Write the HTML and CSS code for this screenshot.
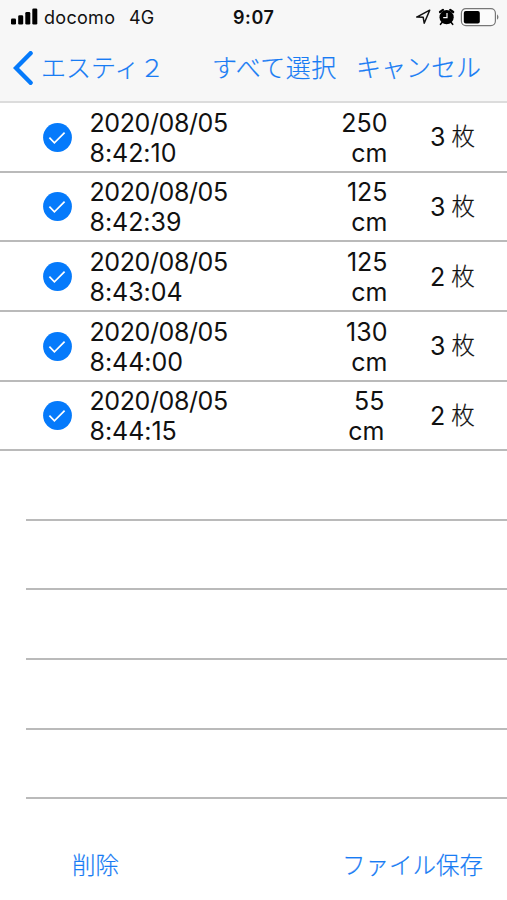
FILE: index.html
```
<!DOCTYPE html>
<html lang="ja">
<head>
<meta charset="utf-8">
<title>エスティ２</title>
<link rel="stylesheet" href="styles.css">
</head>
<body>
<svg class="defs" width="0" height="0">
  <symbol id="check" viewBox="0 0 29 29">
    <circle cx="14.5" cy="14.5" r="14.4" fill="#057afb"/>
    <path d="M6.4 14.6L11.4 19.8L21.6 9.6" fill="none" stroke="#fff" stroke-width="1.7"/>
  </symbol>
</svg>
<header class="top">
  <div class="status">
    <svg class="signal" width="27" height="17" viewBox="0 0 27 17">
      <rect x="0" y="10.5" width="5" height="6" rx="1.3"/>
      <rect x="7.2" y="7.3" width="5" height="9.2" rx="1.3"/>
      <rect x="14.3" y="4" width="5" height="12.5" rx="1.3"/>
      <rect x="21.3" y="0.5" width="5" height="16" rx="1.3"/>
    </svg>
    <span class="carrier">docomo</span>
    <span class="network">4G</span>
    <span class="time">9:07</span>
    <svg class="indicators" width="84" height="20" viewBox="0 0 84 20">
      <path d="M1.7 10.1L14.7 3.2L9.2 16.2L8.2 10.3Z" fill="none" stroke="#111" stroke-width="1.5" stroke-linejoin="round"/>
      <g stroke="#000" stroke-linecap="round" fill="none">
        <path d="M25 5L28 2.8M35.2 2.8L38.2 5" stroke-width="2.2"/>
        <path d="M27 15.5L25.5 17.3M36.2 15.5L37.7 17.3" stroke-width="1.6"/>
      </g>
      <circle cx="31.6" cy="10.2" r="7.1"/>
      <path d="M32 5.9V10.6H28.2" fill="none" stroke="#fff" stroke-width="1.2"/>
      <rect x="46.4" y="1.6" width="34" height="17" rx="4.5" fill="#fbfbfb" stroke="#777" stroke-width="1.2"/>
      <rect x="48.8" y="4" width="16" height="12.4" rx="2"/>
      <path d="M82 7.2Q85 10 82 12.8Z" fill="#777"/>
    </svg>
  </div>
  <nav class="nav">
    <svg class="back" width="20" height="34" viewBox="0 0 20 34">
      <path d="M17.6 2.2L3 17L17.6 31.8" fill="none" stroke="#057afb" stroke-width="4.4" stroke-linecap="round" stroke-linejoin="miter"/>
    </svg>
    <a class="title">エスティ２</a>
    <a class="all">すべて選択</a>
    <a class="cancel">キャンセル</a>
  </nav>
</header>
<main class="list">
  <div class="row"><svg class="mark"><use href="#check"/></svg><div class="date">2020/08/05<br><span>8:42:10</span></div><div class="size">250<br>cm</div><div class="count">3<span>枚</span></div></div>
  <div class="row"><svg class="mark"><use href="#check"/></svg><div class="date">2020/08/05<br><span>8:42:39</span></div><div class="size">125<br>cm</div><div class="count">3<span>枚</span></div></div>
  <div class="row"><svg class="mark"><use href="#check"/></svg><div class="date">2020/08/05<br><span>8:43:04</span></div><div class="size">125<br>cm</div><div class="count">2<span>枚</span></div></div>
  <div class="row"><svg class="mark"><use href="#check"/></svg><div class="date">2020/08/05<br><span>8:44:00</span></div><div class="size">130<br>cm</div><div class="count">3<span>枚</span></div></div>
  <div class="row"><svg class="mark"><use href="#check"/></svg><div class="date">2020/08/05<br><span>8:44:15</span></div><div class="size short">55<br>cm</div><div class="count">2<span>枚</span></div></div>
  <div class="row empty"></div>
  <div class="row empty"></div>
  <div class="row empty"></div>
  <div class="row empty"></div>
  <div class="row empty"></div>
</main>
<footer class="toolbar">
  <a>削除</a>
  <a>ファイル保存</a>
</footer>
</body>
</html>
```
FILE: styles.css
```
* { box-sizing: border-box; }
body {
  margin: 0;
  width: 507px;
  height: 900px;
  overflow: hidden;
  display: flex;
  flex-direction: column;
  background: #fff;
  color: #111;
  font-family: Inter, "Noto Sans CJK JP", sans-serif;
}
svg { display: block; flex: none; }
.defs { position: absolute; }
.top {
  height: 103px;
  flex: none;
  background: #f7f7f7;
  border-bottom: 2px solid #dcdcdc;
}
.status {
  height: 33px;
  display: flex;
  align-items: center;
  padding-left: 11px;
  font-size: 18px;
  line-height: 34px;
  white-space: nowrap;
}
.carrier { width: 86px; padding-left: 6px; padding-top: 2px; letter-spacing: 0.3px; }
.network { width: 109px; padding-left: 5px; padding-top: 2px; }
.time { width: 182px; padding-top: 2px; font-weight: 600; letter-spacing: 0.6px; }
.nav {
  height: 68px;
  display: flex;
  align-items: center;
  padding-left: 13px;
  color: #187cf4;
  font-family: "Noto Sans CJK JP", sans-serif;
  font-weight: 300;
  font-size: 25px;
  line-height: 36px;
  white-space: nowrap;
  -webkit-text-stroke: 0.2px currentColor;
}
.back { margin-top: 1px; }
.nav a { padding-bottom: 3px; }
.title { width: 171px; padding-left: 8px; }
.all { width: 144px; padding-left: 8px; letter-spacing: 0.5px; }
.cancel { padding-left: 8px; }
.list { height: 696.5px; flex: none; }
.row {
  height: 69.65px;
  display: grid;
  grid-template-columns: 46.5px 198px 100px 1fr;
  align-items: center;
  padding-left: 43px;
  border-bottom: 2px solid #bababa;
  font-size: 25px;
  line-height: 30px;
}
.mark { width: 29px; height: 29px; margin-top: 1px; }
.date { padding-top: 2px; letter-spacing: -0.4px; }
.date span { letter-spacing: -0.05px; }
.size { padding-top: 2px; text-align: right; }
.short { padding-right: 3px; }
.count { display: flex; align-items: center; padding: 1px 0 0 42.5px; }
.count span { font-size: 23.5px; margin-left: 6px; font-weight: 300; -webkit-text-stroke: 0.2px currentColor; }
.empty { margin-left: 26px; }
.toolbar {
  flex: 1;
  display: flex;
  align-items: center;
  justify-content: space-between;
  padding: 29px 24px 0 72px;
  color: #187cf4;
  font-family: "Noto Sans CJK JP", sans-serif;
  font-weight: 300;
  font-size: 23.5px;
  -webkit-text-stroke: 0.2px currentColor;
}
```
